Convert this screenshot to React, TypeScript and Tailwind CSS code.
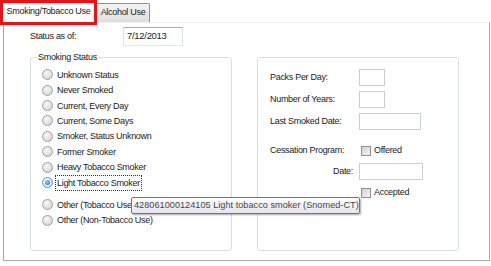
import React from "react";

const font = { fontFamily: '"Liberation Sans", Arial, sans-serif' };

function Radio({ label, checked = false, focus = false }: { label: string; checked?: boolean; focus?: boolean }) {
  return (
    <div className="flex items-center h-[15.43px]">
      <span
        className={
          "w-[11px] h-[11px] rounded-full border flex items-center justify-center shrink-0 " +
          (checked
            ? "border-[#6f8fae] bg-[radial-gradient(circle_at_40%_35%,#ffffff,#d2d9e0)]"
            : "border-[#a0a0a0] bg-[radial-gradient(circle_at_40%_35%,#f8f8f8,#cfcfcf)]")
        }
      >
        {checked && (
          <span className="w-[5px] h-[5px] rounded-full bg-[radial-gradient(circle_at_40%_35%,#8fd0f5,#1c6bb5)]" />
        )}
      </span>
      <span
        className={
          "ml-[4px] leading-[12px] " +
          (focus ? "outline outline-1 outline-dotted outline-[#333] outline-offset-[1px]" : "")
        }
      >
        {label}
      </span>
    </div>
  );
}

function Checkbox({ label }: { label: string }) {
  return (
    <div className="flex items-center h-[13px]">
      <span className="w-[10px] h-[10px] ml-[2px] border border-[#8f8f8f] bg-[linear-gradient(135deg,#d0d0d0,#f4f4f4)] shrink-0" />
      <span className="ml-[3px]">{label}</span>
    </div>
  );
}

export default function App() {
  return (
    <div
      className="relative w-[491px] h-[266px] bg-white text-[9px] tracking-[-0.3px] text-[#1b1b1b] overflow-hidden"
      style={font}
    >
      {/* Tab strip */}
      <div className="flex items-start h-[22px]">
        <div className="relative z-10 w-[97px] h-[25px] border-[3px] border-[#e0161d] bg-white flex items-center justify-center pb-[2px]">
          Smoking/Tobacco Use
        </div>
        <div className="mt-[3px] w-[53px] h-[19px] border border-l-0 border-b-0 border-[#8d9097] rounded-tr-[2px] bg-[linear-gradient(#f4f4f4,#dedede)] flex items-center justify-center">
          Alcohol Use
        </div>
      </div>

      {/* Panel */}
      <div className="ml-[3px] w-[487px] h-[239px] border border-t-[#eeeeee] border-[#a9a9a9] bg-white">
        <div className="flex items-center mt-[4px] ml-[26px]">
          <span className="w-[93px]">Status as of:</span>
          <div className="w-[60px] h-[19px] border border-[#abadb3] border-l-[#dbdfe6] border-r-[#dbdfe6] border-b-[#e3e9ef] flex items-center pl-[3px] text-[9.5px]">
            7/12/2013
          </div>
        </div>

        <div className="flex mt-[11px] ml-[26px] gap-[25px]">
          {/* Smoking Status group */}
          <div className="relative w-[202px] h-[194px] border border-[#d5dfe5] rounded-[3px] pl-[11px] pt-[9px]">
            <span className="absolute left-[6px] -top-[7px] px-[1px] bg-white leading-[12px]">Smoking Status</span>
            <Radio label="Unknown Status" />
            <Radio label="Never Smoked" />
            <Radio label="Current, Every Day" />
            <Radio label="Current, Some Days" />
            <Radio label="Smoker, Status Unknown" />
            <Radio label="Former Smoker" />
            <Radio label="Heavy Tobacco Smoker" />
            <Radio label="Light Tobacco Smoker" checked focus />
            <div className="h-[6.5px]" />
            <Radio label="Other (Tobacco Use)" />
            <Radio label="Other (Non-Tobacco Use)" />
          </div>

          {/* Right group */}
          <div className="w-[202px] h-[194px] border border-[#d5dfe5] rounded-[3px] pl-[12px] pt-[11px]">
            <div className="flex items-center h-[17px]">
              <span className="w-[89px]">Packs Per Day:</span>
              <div className="w-[26px] h-[17px] border border-[#c9ced6]" />
            </div>
            <div className="flex items-center h-[17px] mt-[5px]">
              <span className="w-[89px]">Number of Years:</span>
              <div className="w-[26px] h-[17px] border border-[#c9ced6]" />
            </div>
            <div className="flex items-center h-[17px] mt-[5px]">
              <span className="w-[89px]">Last Smoked Date:</span>
              <div className="w-[62px] h-[17px] border border-[#c9ced6]" />
            </div>
            <div className="flex items-center h-[13px] mt-[14.5px]">
              <span className="w-[89px]">Cessation Program:</span>
              <Checkbox label="Offered" />
            </div>
            <div className="flex items-center h-[17px] mt-[5.5px]">
              <span className="w-[83px] text-right">Date:</span>
              <div className="ml-[6px] w-[64px] h-[17px] border border-[#c9ced6]" />
            </div>
            <div className="flex items-center h-[13px] mt-[6.5px]">
              <span className="w-[89px]" />
              <Checkbox label="Accepted" />
            </div>
          </div>
        </div>
      </div>

      {/* Tooltip */}
      <div
        className="absolute left-[131px] top-[197px] w-[229px] h-[17px] border border-[#767676] rounded-[2px] bg-[linear-gradient(#ffffff,#e4e5f0)] shadow-[1px_1px_2px_rgba(0,0,0,0.35)] flex items-center pl-[2px] text-[9.2px] tracking-normal text-[#444444] whitespace-nowrap"
      >
        428061000124105 Light tobacco smoker (Snomed-CT)
      </div>
    </div>
  );
}
